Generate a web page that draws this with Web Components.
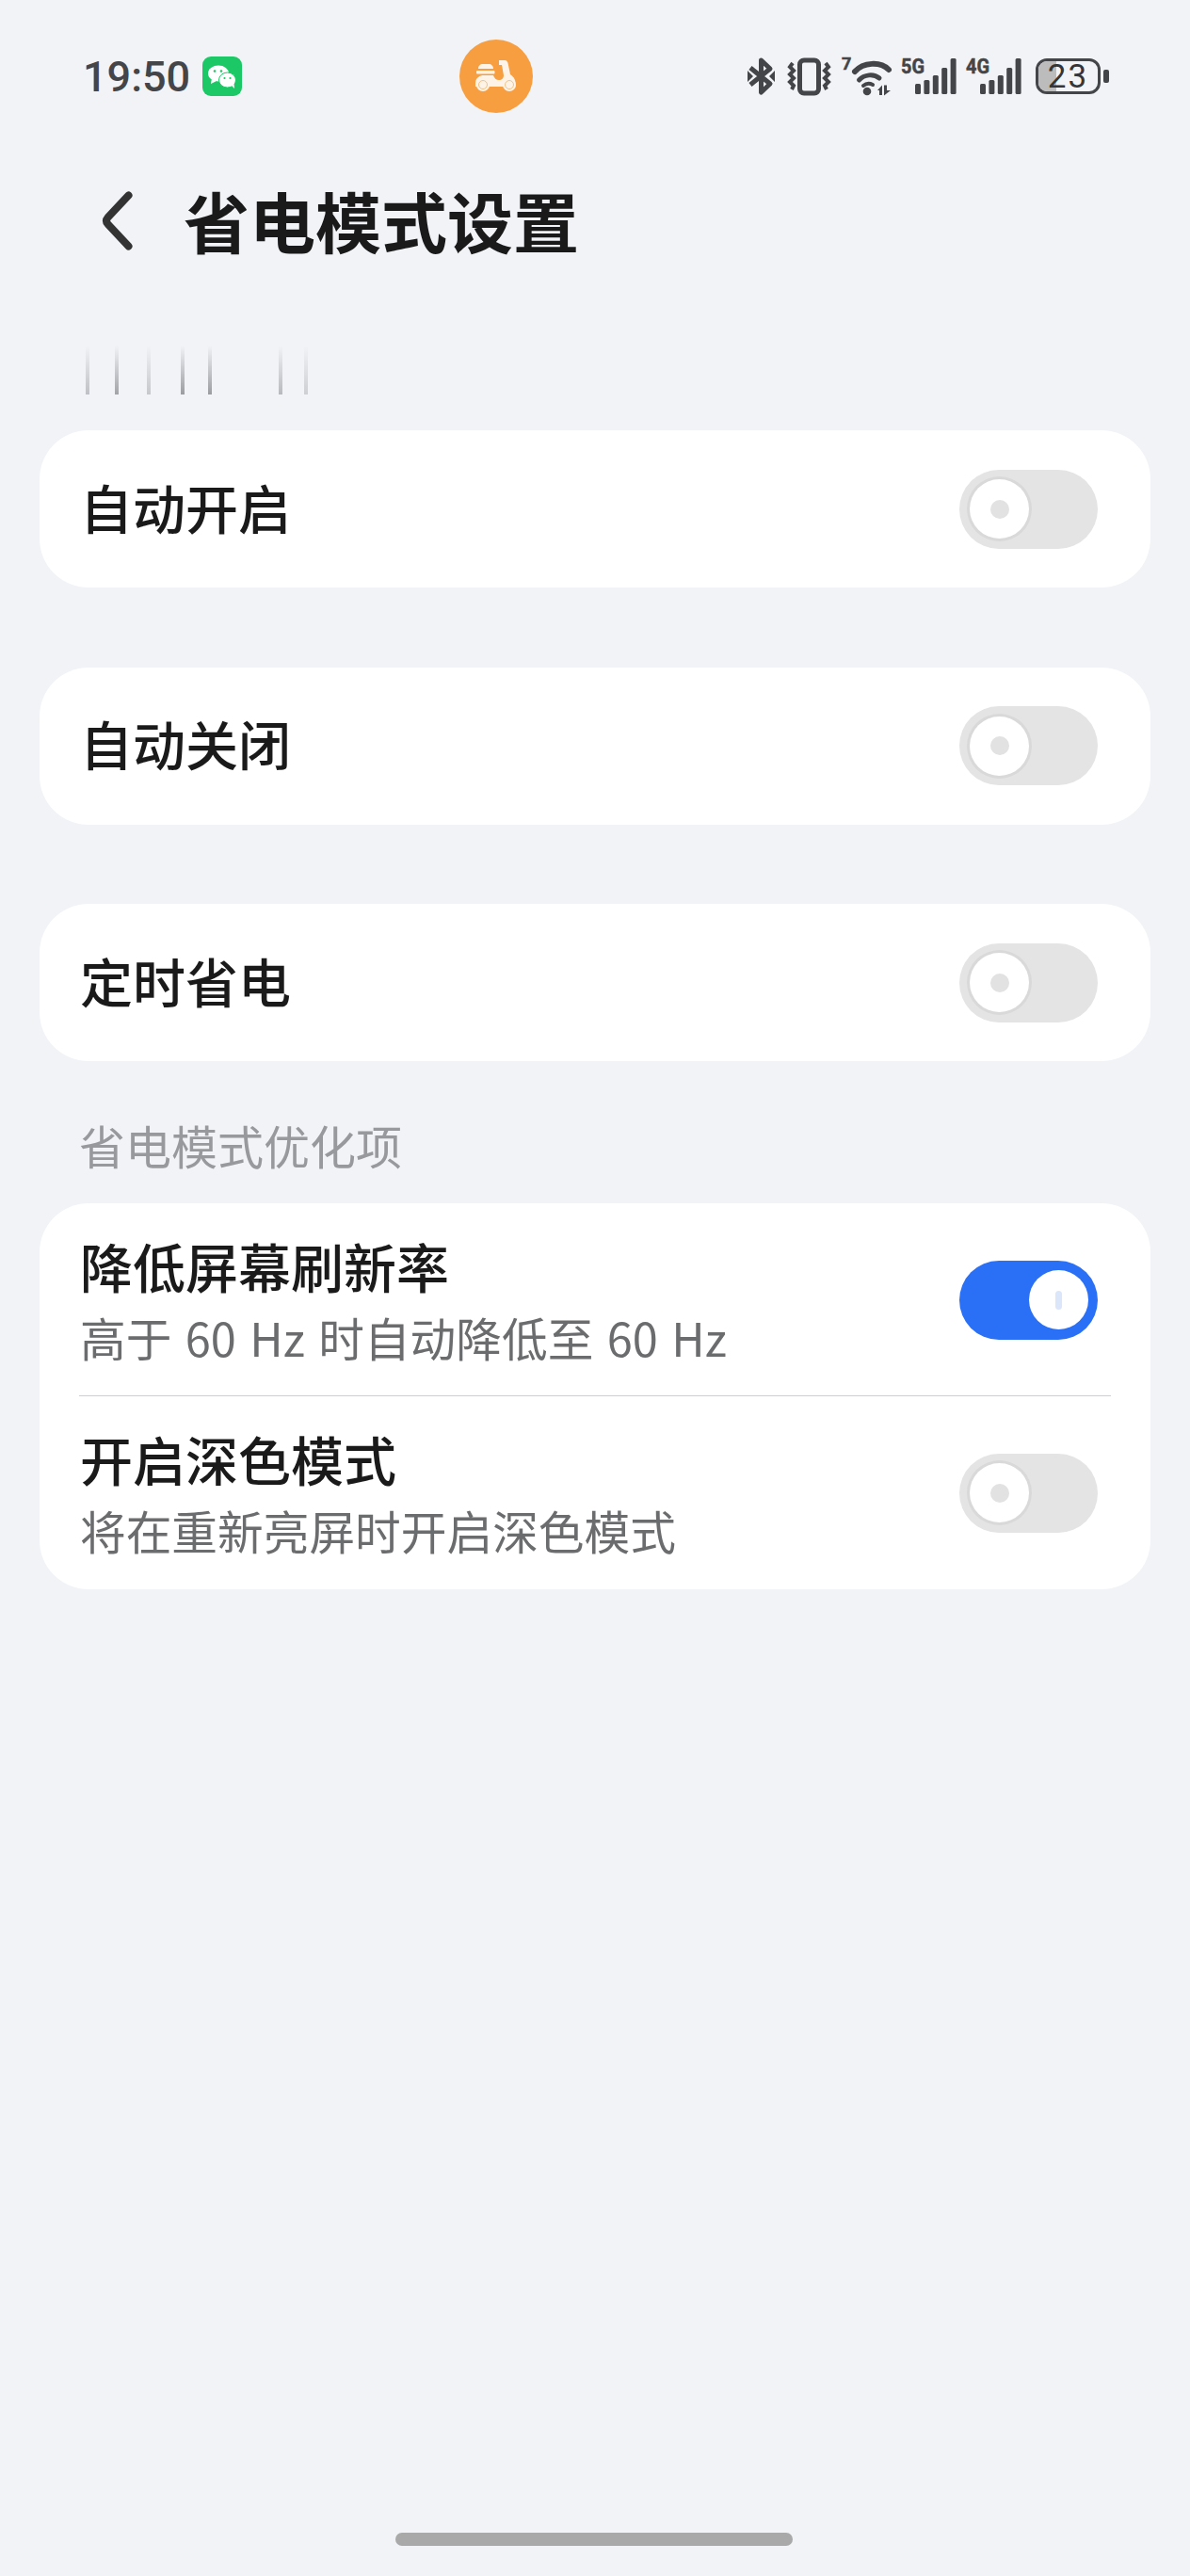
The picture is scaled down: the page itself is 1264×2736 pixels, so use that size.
<!DOCTYPE html>
<html lang="zh">
<head>
<meta charset="utf-8">
<title>省电模式设置</title>
<style>
  html, body { margin: 0; padding: 0; }
  body {
    width: 1264px;
    height: 2736px;
    background: #f1f3f7;
    font-family: "Noto Sans CJK SC", "Noto Sans", sans-serif;
    display: flex;
    flex-direction: column;
    overflow: hidden;
  }
</style>
</head>
<body>
  <status-bar></status-bar>
  <title-bar>省电模式设置</title-bar>
  <blur-strip></blur-strip>

  <setting-card><setting-row title="自动开启"></setting-row></setting-card>
  <setting-card gap><setting-row title="自动关闭"></setting-row></setting-card>
  <setting-card gap><setting-row title="定时省电"></setting-row></setting-card>

  <section-label>省电模式优化项</section-label>

  <setting-card>
    <setting-row title="降低屏幕刷新率" sub="高于 60 Hz 时自动降低至 60 Hz" on first></setting-row>
    <setting-row title="开启深色模式" sub="将在重新亮屏时开启深色模式"></setting-row>
  </setting-card>

  <home-bar></home-bar>

<script>
class statusBar extends HTMLElement {
  constructor() {
    super();
    this.shadowDOM = this.attachShadow({ mode: "open" });
  }

  connectedCallback() {
    this.shadowDOM.innerHTML = `
      <style>
        :host {
          display: grid;
          grid-template-columns: 400px 78px 1fr;
          align-items: center;
          height: 78px;
          padding: 42px 86px 0 88px;
          color: #444548;
        }
        .left { display: flex; align-items: center; gap: 13px; }
        .time { font: 500 45px/1 Roboto, sans-serif; }
        .scooter { width: 78px; height: 78px; display: block; }
        .right { display: flex; align-items: center; justify-content: flex-end; }
        svg { display: block; flex: none; overflow: visible; }
        text { font-family: Roboto, sans-serif; font-weight: 700; fill: #444548; }
      </style>
      <div class="left">
        <span class="time">19:50</span>
        <svg width="42" height="42" viewBox="0 0 42 42">
          <rect width="42" height="42" rx="9" fill="#1cc865"/>
          <ellipse cx="17" cy="18" rx="11" ry="8.5" fill="#fff"/>
          <path d="M10 23l-1 6 6-3z" fill="#fff"/>
          <ellipse cx="26.5" cy="25" rx="9" ry="8" fill="#fff" stroke="#1cc865" stroke-width="1"/>
          <path d="M31 31l3 3-.5-5z" fill="#fff"/>
          <circle cx="13" cy="15.5" r="1.3" fill="#1cc865"/><circle cx="20" cy="15.5" r="1.3" fill="#1cc865"/>
          <circle cx="23.5" cy="23" r="1.1" fill="#1cc865"/><circle cx="29.5" cy="23" r="1.1" fill="#1cc865"/>
        </svg>
      </div>
      <svg class="scooter" viewBox="0 0 78 78">
        <circle cx="39" cy="39" r="39" fill="#f79e40"/>
        <path d="M17 50v-4c0-5 4-8 9-8h10c1 3 3 5 6 5 3 0 5-2 5-5l-2-11h-3v-5h6c2 0 3 1 3.5 3l2.5 12c3 2 5.5 5 5.5 9v4z" fill="#fdf3e6"/>
        <path d="M20 31c0-3 2-5 5-5h6c3 0 5 2 5 5zM19 33h17.500c.5 0 1 .5 1 1v1.500c0 .5-.5 1-1 1H19c-.5 0-1-.5-1-1V34c0-.5.5-1 1-1z" fill="#fdf3e6"/>
        <circle cx="25" cy="48" r="7" fill="#fdf3e6"/>
        <circle cx="53" cy="48" r="7" fill="#fdf3e6"/>
        <circle cx="25" cy="48" r="4.5" fill="none" stroke="#f3c38a" stroke-width="1"/>
        <circle cx="53" cy="48" r="4.5" fill="none" stroke="#f3c38a" stroke-width="1"/>
      </svg>
      <div class="right">
        <svg width="29" height="40" viewBox="0 0 29 40" style="margin-right:14px">
          <path d="M3 11l21 17-9.500 9V3l9.500 9L3 29" fill="none" stroke="#444548" stroke-width="5" stroke-linejoin="round"/>
          <path d="M0 14v12l6-6zM29 14v12l-6-6z" fill="#444548"/>
        </svg>
        <svg width="46" height="40" viewBox="0 0 46 40" style="margin-right:11px">
          <rect x="12.5" y="3" width="20" height="35" rx="4.5" fill="none" stroke="#444548" stroke-width="5"/>
          <path d="M5 6l-3 4 4 4-4 4 4 4-4 4 4 4-2 4" fill="none" stroke="#444548" stroke-width="4"/>
          <path d="M40 6l3 4-4 4 4 4-4 4 4 4-4 4 2 4" fill="none" stroke="#444548" stroke-width="4"/>
        </svg>
        <svg width="56" height="42" viewBox="0 0 56 42" style="margin-right:7px">
          <text x="0" y="14" font-size="18" stroke="#444548" stroke-width=".5">7</text>
          <path d="M14 16C23 6 41 5 50 14" fill="none" stroke="#444548" stroke-width="6" stroke-linecap="round"/>
          <path d="M18.5 25C24 19 34 18 40 23" fill="none" stroke="#444548" stroke-width="5" stroke-linecap="round"/>
          <path d="M23 31c3-2.500 7-2.500 10-1" fill="none" stroke="#444548" stroke-width="4" stroke-linecap="round"/>
          <circle cx="27" cy="37" r="4.3" fill="#444548"/>
          <path d="M38 36l5-5.500V41h-3v-5zM45 30.500h3V36h4l-7 5.500z" fill="#444548"/>
        </svg>
        <cell-signal label="5G" style="margin-right:9px"></cell-signal>
        <cell-signal label="4G" style="margin-right:14px"></cell-signal>
        <battery-icon level="23"></battery-icon>
      </div>
    `;
  }
}

class cellSignal extends HTMLElement {
  constructor() {
    super();
    this.shadowDOM = this.attachShadow({ mode: "open" });
  }

  connectedCallback() {
    this.shadowDOM.innerHTML = `
      <style>
        :host { display: block; flex: none; width: 60px; height: 42px; }
        svg { display: block; overflow: visible; }
        text { font: 700 22px Roboto, sans-serif; fill: #444548; stroke: #444548; stroke-width: .5px; }
      </style>
      <svg width="60" height="42" viewBox="0 0 60 42">
        <text x="0" y="18" textLength="25" lengthAdjust="spacingAndGlyphs">${this.getAttribute("label")}</text>
        <rect x="15" y="29" width="6" height="11" rx="1.5" fill="#444548"/>
        <rect x="24.4" y="25" width="6" height="15" rx="1.5" fill="#444548"/>
        <rect x="33.8" y="20" width="6" height="20" rx="1.5" fill="#444548"/>
        <rect x="43.2" y="12" width="6" height="28" rx="1.5" fill="#444548"/>
        <rect x="52.6" y="2" width="6" height="38" rx="1.5" fill="#444548"/>
      </svg>
    `;
  }
}

class batteryIcon extends HTMLElement {
  constructor() {
    super();
    this.shadowDOM = this.attachShadow({ mode: "open" });
  }

  connectedCallback() {
    this.shadowDOM.innerHTML = `
      <style>
        :host { display: flex; align-items: center; gap: 3px; flex: none; }
        .body {
          box-sizing: border-box;
          position: relative;
          width: 69px;
          height: 38px;
          border: 3.5px solid #444548;
          border-radius: 12px;
          display: flex;
          align-items: center;
          justify-content: center;
          overflow: hidden;
          font: 400 35px/1 Roboto, sans-serif;
          letter-spacing: 2px;
          color: #333538;
        }
        .fill { position: absolute; left: 0; top: 0; bottom: 0; width: 30%; background: #bcbcbc; }
        .level { position: relative; }
        .nub { width: 6px; height: 14px; border-radius: 2px; background: #444548; }
      </style>
      <div class="body"><div class="fill"></div><span class="level">${this.getAttribute("level")}</span></div>
      <div class="nub"></div>
    `;
  }
}

class titleBar extends HTMLElement {
  constructor() {
    super();
    this.shadowDOM = this.attachShadow({ mode: "open" });
  }

  connectedCallback() {
    this.shadowDOM.innerHTML = `
      <style>
        :host {
          display: flex;
          align-items: center;
          height: 84px;
          margin-top: 72px;
          padding-left: 108px;
        }
        svg { display: block; flex: none; margin-right: 54px; }
        .text {
          font: 700 70px/84px "Noto Sans CJK SC", sans-serif;
          color: #1a1a1a;
        }
      </style>
      <svg width="33" height="63" viewBox="0 0 33 63">
        <path d="M28.5 4.500L6.500 28q-3 3.500 0 7l22 23.500" fill="none" stroke="#333" stroke-width="8" stroke-linecap="round" stroke-linejoin="round"/>
      </svg>
      <span class="text"><slot></slot></span>
    `;
  }
}

class blurStrip extends HTMLElement {
  constructor() {
    super();
    this.shadowDOM = this.attachShadow({ mode: "open" });
  }

  connectedCallback() {
    const gaps = [0, 27, 30, 32, 25, 71, 23];
    const alpha = [0.35, 0.55, 0.3, 0.6, 0.6, 0.4, 0.25];
    const bars = gaps.map((g, i) => `<i style="margin-left:${g}px;opacity:${alpha[i]}"></i>`).join("");
    this.shadowDOM.innerHTML = `
      <style>
        :host {
          display: flex;
          height: 52px;
          margin-top: 91px;
          margin-bottom: 37px;
          padding-left: 91px;
        }
        i {
          display: block;
          width: 4px;
          height: 52px;
          background: linear-gradient(to bottom, rgba(90,90,95,0), rgba(90,90,95,.95));
        }
      </style>
      ${bars}
    `;
  }
}

class settingCard extends HTMLElement {
  constructor() {
    super();
    this.shadowDOM = this.attachShadow({ mode: "open" });
  }

  connectedCallback() {
    this.shadowDOM.innerHTML = `
      <style>
        :host {
          display: block;
          margin: 1px 42px 0;
          background: #fff;
          border-radius: 52px;
        }
        :host([gap]) { margin-top: 84.5px; }
      </style>
      <slot></slot>
    `;
  }
}

class settingRow extends HTMLElement {
  constructor() {
    super();
    this.shadowDOM = this.attachShadow({ mode: "open" });
  }

  connectedCallback() {
    const sub = this.getAttribute("sub");
    this.shadowDOM.innerHTML = `
      <style>
        :host {
          display: flex;
          align-items: center;
          justify-content: space-between;
          box-sizing: border-box;
          height: 167px;
          padding: 0 56px 0 43px;
          position: relative;
        }
        :host([sub]) { height: 205px; }
        .title {
          font: 500 56px/66px "Noto Sans CJK SC", sans-serif;
          color: #1a1a1a;
        }
        :host(:not([sub])) .title { margin-bottom: 6px; }
        .sub {
          font: 400 48.7px/60px "Noto Sans CJK SC", "Noto Sans", sans-serif;
          word-spacing: 3.5px;
          color: #6b6c6e;
          margin-top: 13px;
        }
        .rule {
          position: absolute;
          left: 42px;
          right: 42px;
          bottom: 0;
          height: 1px;
          background: #cfcfd1;
        }
      </style>
      <div>
        <div class="title">${this.getAttribute("title")}</div>
        ${sub ? `<div class="sub">${sub}</div>` : ""}
      </div>
      <toggle-switch ${this.hasAttribute("on") ? "on" : ""}></toggle-switch>
      ${this.hasAttribute("first") ? `<div class="rule"></div>` : ""}
    `;
  }
}

class toggleSwitch extends HTMLElement {
  constructor() {
    super();
    this.shadowDOM = this.attachShadow({ mode: "open" });
  }

  connectedCallback() {
    this.shadowDOM.innerHTML = `
      <style>
        :host {
          display: flex;
          align-items: center;
          flex: none;
          box-sizing: border-box;
          width: 147px;
          height: 84px;
          border-radius: 42px;
          background: #e4e4e5;
          padding: 0 10px;
        }
        :host([on]) {
          background: #2a70f6;
          justify-content: flex-end;
        }
        .knob {
          box-sizing: border-box;
          width: 63px;
          height: 63px;
          border-radius: 50%;
          background: #fff;
          display: flex;
          align-items: center;
          justify-content: center;
          box-shadow: 0 0 0 3px #d9d9da;
          margin-left: 1px;
        }
        :host([on]) .knob { box-shadow: none; margin: 0; }
        .mark {
          width: 20px;
          height: 20px;
          border-radius: 50%;
          background: #e2e2e3;
        }
        :host([on]) .mark {
          width: 7px;
          border-radius: 4px;
          background: #dbe6fb;
        }
      </style>
      <div class="knob"><div class="mark"></div></div>
    `;
  }
}

class sectionLabel extends HTMLElement {
  constructor() {
    super();
    this.shadowDOM = this.attachShadow({ mode: "open" });
  }

  connectedCallback() {
    this.shadowDOM.innerHTML = `
      <style>
        :host {
          display: block;
          margin-top: 59px;
          padding-left: 84px;
          font: 400 49px/60px "Noto Sans CJK SC", sans-serif;
          color: #98999c;
          height: 91px;
        }
      </style>
      <slot></slot>
    `;
  }
}

class homeBar extends HTMLElement {
  constructor() {
    super();
    this.shadowDOM = this.attachShadow({ mode: "open" });
  }

  connectedCallback() {
    this.shadowDOM.innerHTML = `
      <style>
        :host {
          display: block;
          width: 422px;
          height: 14px;
          margin: auto 0 32px 420px;
          border-radius: 7px;
          background: #a8a9a8;
        }
      </style>
    `;
  }
}

customElements.define("status-bar", statusBar);
customElements.define("cell-signal", cellSignal);
customElements.define("battery-icon", batteryIcon);
customElements.define("title-bar", titleBar);
customElements.define("blur-strip", blurStrip);
customElements.define("setting-card", settingCard);
customElements.define("setting-row", settingRow);
customElements.define("toggle-switch", toggleSwitch);
customElements.define("section-label", sectionLabel);
customElements.define("home-bar", homeBar);
</script>
</body>
</html>
